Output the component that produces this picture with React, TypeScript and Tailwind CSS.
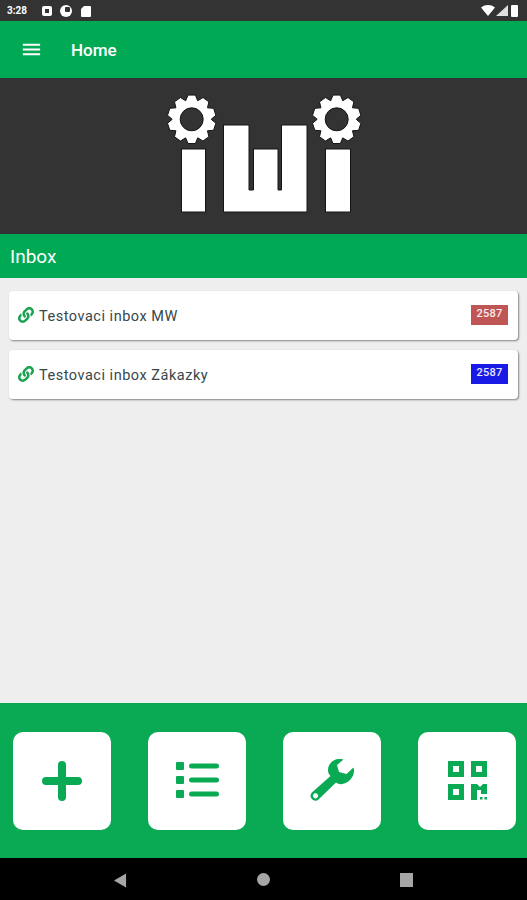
import { FaLink } from 'react-icons/fa'
import { MdMenu } from 'react-icons/md'

// ─── Logo ─────────────────────────────────────────────────────

function gearPath(cx: number, cy: number) {
  const teeth = 10
  const points: string[] = []
  for (let i = 0; i < teeth; i++) {
    const step = (Math.PI * 2) / teeth
    const a = i * step - Math.PI / 2
    const offsets: [number, number][] = [
      [-0.5, 19.5],
      [-0.24, 24.5],
      [0.24, 24.5],
      [0.5, 19.5],
    ]
    offsets.forEach(([o, r]) => {
      const t = a + o * step
      points.push(`${(cx + Math.cos(t) * r).toFixed(2)} ${(cy + Math.sin(t) * r).toFixed(2)}`)
    })
  }
  const hole = 11.5
  return `M${points.join('L')}Z M${cx - hole} ${cy}a${hole} ${hole} 0 1 0 ${hole * 2} 0a${hole} ${hole} 0 1 0 ${-hole * 2} 0Z`
}

function Logo() {
  return (
    <svg viewBox="0 78 527 156" className="block w-full h-[156px]">
      <g fill="#ffffff" stroke="#141414" strokeWidth="1" strokeLinejoin="round">
        <path d={gearPath(191.7, 119.3)} fillRule="evenodd" />
        <path d={gearPath(336.7, 119.3)} fillRule="evenodd" />
        <rect x="181.5" y="149" width="24" height="63" />
        <rect x="325.5" y="149" width="25" height="63" />
        <path d="M223.5 125H249V190H253.5V149H278V190H281.5V125H307V212H223.5Z" />
      </g>
    </svg>
  )
}

// ─── Status bar ───────────────────────────────────────────────

function StatusBar() {
  return (
    <div className="h-[21px] bg-[#333333] flex items-center pl-[7px] pr-[9px] text-white">
      <span className="text-[10px] font-bold leading-none w-[26px]">3:28</span>
      <div className="ml-[9px] w-[10px] h-[10px] bg-white rounded-[2px] flex items-center justify-center">
        <div className="w-[4px] h-[4px] bg-[#333333]" />
      </div>
      <div className="ml-[8px] w-[12px] h-[12px] bg-white rounded-full flex items-center justify-center">
        <div className="w-[5px] h-[5px] bg-[#333333] rounded-[1px] ml-[2px] mt-[-2px]" />
      </div>
      <svg viewBox="0 0 10 12" className="ml-[9px] w-[10px] h-[12px]">
        <path d="M3 1H9a1 1 0 0 1 1 1V11a1 1 0 0 1-1 1H1a1 1 0 0 1-1-1V4Z" fill="#ffffff" />
      </svg>
      <div className="ml-auto flex items-center gap-[1px]">
        <svg viewBox="0 0 14 11" className="w-[14px] h-[11px]">
          <path d="M0 2.5C4 -0.8 10 -0.8 14 2.5L7 11Z" fill="#ffffff" />
        </svg>
        <svg viewBox="0 0 12 11" className="w-[12px] h-[11px]">
          <path d="M12 0V11H0Z" fill="#ffffff" fillOpacity="0.85" />
        </svg>
        <div className="ml-[2px] w-[7px] h-[12px] bg-white rounded-[1px]" />
      </div>
    </div>
  )
}

// ─── Inbox ────────────────────────────────────────────────────

function InboxRow({ name, count, badge }: { name: string; count: string; badge: string }) {
  return (
    <div className="h-[49px] bg-white rounded-[4px] shadow-[1px_1px_2px_rgba(0,0,0,0.45)] flex items-center pl-[9px] pr-[10px]">
      <FaLink size={16} className="text-[#1aa34f] shrink-0 mt-[-2px]" />
      <span className="ml-[5px] text-[14.5px] tracking-[0.52px] text-[#37474a] mt-[3px]">{name}</span>
      <span
        className={`ml-auto mt-[-2px] w-[37px] h-[20px] flex items-center justify-center text-[11px] font-medium tracking-[0.3px] text-white/90 ${badge}`}
      >
        {count}
      </span>
    </div>
  )
}

// ─── Action icons ─────────────────────────────────────────────

function AddIcon() {
  return (
    <svg viewBox="0 0 40 40" className="w-[40px] h-[40px]">
      <path d="M20 4V36M4 20H36" fill="none" stroke="currentColor" strokeWidth="8" strokeLinecap="round" />
    </svg>
  )
}

function ListIcon() {
  return (
    <svg viewBox="0 0 43 37" className="w-[43px] h-[37px]" fill="currentColor">
      <rect x="0" y="0" width="8" height="8" rx="1" />
      <rect x="0" y="14" width="8" height="8" rx="1" />
      <rect x="0" y="28" width="8" height="8" rx="1" />
      <rect x="13" y="1.5" width="30" height="5" rx="2.5" />
      <rect x="13" y="15.5" width="30" height="5" rx="2.5" />
      <rect x="13" y="29.5" width="30" height="5" rx="2.5" />
    </svg>
  )
}

function WrenchIcon() {
  return (
    <svg viewBox="0 0 45 45" className="w-[45px] h-[45px]" fill="currentColor">
      <path
        fillRule="evenodd"
        d="M29 1C23 1 18 6 18 12C18 14 18.5 16 20.5 18L3 33.5C0 36 0 38.5 1.5 40.5C3.5 43 6.5 43.5 8.5 41.5L26 24.5C28 26 30 26.5 32 26C38.5 25 44 19.5 44 12.5C44 11.5 43.8 10.5 43.5 9.5L36.5 16L29 14L27 7L33.5 1.5C32 1 30.5 1 29 1ZM5.5 35.2a2.6 2.6 0 1 0 0.01 0Z"
      />
    </svg>
  )
}

function QrIcon() {
  return (
    <svg viewBox="0 0 39 39" className="w-[39px] h-[39px]" fill="currentColor">
      <path fillRule="evenodd" d="M0 0H16V16H0ZM5 5V11H11V5Z" />
      <path fillRule="evenodd" d="M23 0H39V16H23ZM28 5V11H34V5Z" />
      <path fillRule="evenodd" d="M0 23H16V39H0ZM5 28V34H11V28Z" />
      <path d="M23 23H29L32 26L35 23H39V33H33V29H29V39H23Z" />
      <rect x="32" y="36" width="2.5" height="2.5" />
      <rect x="36.5" y="36" width="2.5" height="2.5" />
    </svg>
  )
}

const ACTIONS = [
  { key: 'add', icon: <AddIcon /> },
  { key: 'list', icon: <ListIcon /> },
  { key: 'tools', icon: <WrenchIcon /> },
  { key: 'qr', icon: <QrIcon /> },
]

export default function App() {
  return (
    <div className="w-[527px] h-[900px] flex flex-col bg-[#eeeeee] font-['Roboto',sans-serif] overflow-hidden">
      <StatusBar />

      {/* App bar */}
      <div className="h-[57px] bg-[#00aa55] flex items-center pl-[20px] text-white">
        <MdMenu size={23} />
        <span className="ml-[28px] mt-[3px] text-[17px] font-medium">Home</span>
      </div>

      <div className="bg-[#333333]">
        <Logo />
      </div>

      <div className="h-[44px] bg-[#00aa55] flex items-center pl-[10px] pt-[2px] text-[19px] text-white">Inbox</div>

      {/* List */}
      <div className="flex-1 flex flex-col gap-[10px] pt-[13px] pl-[9px] pr-[9px]">
        <InboxRow name="Testovaci inbox MW" count="2587" badge="bg-[#c05555]" />
        <InboxRow name="Testovaci inbox Zákazky" count="2587" badge="bg-[#1a1ae6]" />
      </div>

      {/* Bottom actions */}
      <div className="h-[155px] bg-[#0aaa55] flex items-center gap-[37px] pl-[13px]">
        {ACTIONS.map((action) => (
          <button
            key={action.key}
            type="button"
            className="w-[98px] h-[98px] bg-white rounded-[10px] flex items-center justify-center text-[#0aaa55]"
          >
            {action.icon}
          </button>
        ))}
      </div>

      {/* Nav bar */}
      <div className="h-[42px] bg-black relative flex items-center justify-center">
        <svg viewBox="0 0 14 15" className="absolute left-[114px] top-[15px] w-[13px] h-[15px]">
          <path d="M13 0V15L0 7.5Z" fill="#a6a6a6" />
        </svg>
        <div className="w-[13px] h-[13px] rounded-full bg-[#a6a6a6]" />
        <div className="absolute left-[400px] top-[15px] w-[13px] h-[14px] bg-[#a6a6a6]" />
      </div>
    </div>
  )
}
